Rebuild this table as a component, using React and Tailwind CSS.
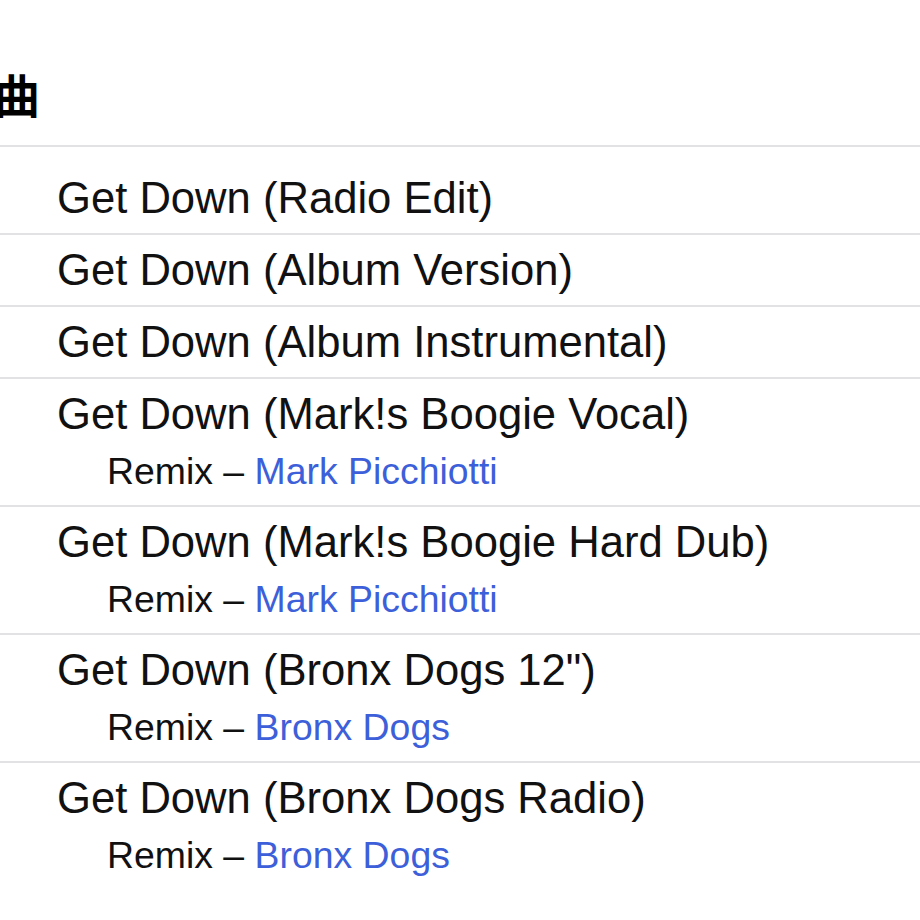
import React from 'react';

const tracks = [
  { title: 'Get Down (Radio Edit)' },
  { title: 'Get Down (Album Version)' },
  { title: 'Get Down (Album Instrumental)' },
  { title: 'Get Down (Mark!s Boogie Vocal)', remix: 'Mark Picchiotti' },
  { title: 'Get Down (Mark!s Boogie Hard Dub)', remix: 'Mark Picchiotti' },
  { title: 'Get Down (Bronx Dogs 12")', remix: 'Bronx Dogs' },
  { title: 'Get Down (Bronx Dogs Radio)', remix: 'Bronx Dogs' },
];

const TrackRow = ({ track, first, last }) => (
  <div
    className={`pl-[57px] ${first ? 'pt-[30px]' : 'pt-[14px]'} ${
      track.remix ? 'pb-[16px]' : 'pb-[13px]'
    } ${last ? '' : 'border-b-2 border-[#e2e2e4]'}`}
  >
    <div className="text-[43.6px] leading-[43px] text-[#111] whitespace-nowrap">{track.title}</div>
    {track.remix && (
      <div className="pl-[50px] mt-[17px] text-[37.4px] leading-[36px] text-[#111] whitespace-nowrap">
        Remix – <span className="text-[#3d5fd9]">{track.remix}</span>
      </div>
    )}
  </div>
);

export default function App() {
  return (
    <div className="w-[920px] h-[920px] overflow-hidden bg-white font-['Liberation_Sans','Noto_Sans_CJK_JP',sans-serif]">
      {/* Section header, cut off at the left edge */}
      <div className="h-[147px] border-b-2 border-[#e2e2e4] pt-[65px]">
        <div className="ml-[-6px] text-[46px] leading-[56px] font-bold text-black font-['Noto_Sans_CJK_JP',sans-serif]">
          曲
        </div>
      </div>

      {/* Track list */}
      <div>
        {tracks.map((t, i) => (
          <TrackRow key={i} track={t} first={i === 0} last={i === tracks.length - 1} />
        ))}
      </div>
    </div>
  );
}
